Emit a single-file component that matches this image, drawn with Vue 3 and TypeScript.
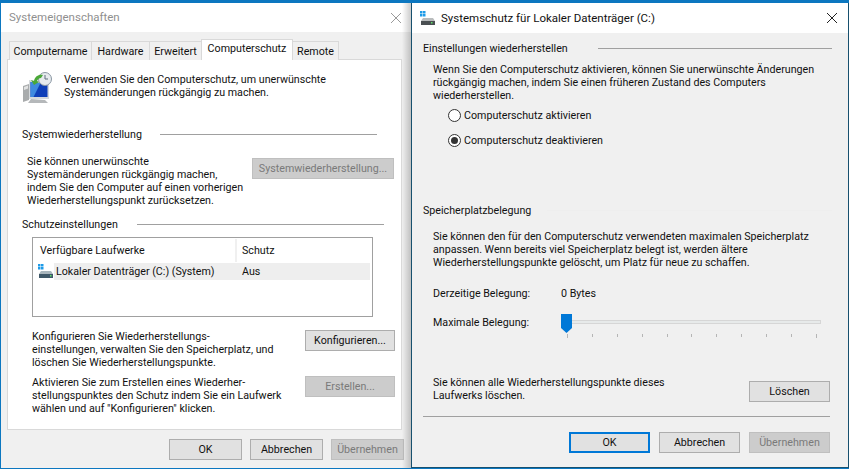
<script setup lang="ts">
const tabs = ['Computername', 'Hardware', 'Erweitert', 'Computerschutz', 'Remote']
const ticks = Array.from({ length: 11 }, (_, i) => i)
</script>

<template>
  <div class="screen">
    <section class="win left">
      <header class="title"><span class="title-text muted">Systemeigenschaften</span>
        <svg class="close" viewBox="0 0 12 12" width="12" height="12"><path d="M1 1l10 10M11 1L1 11" stroke="#9a9a9a" stroke-width="1" fill="none"/></svg>
      </header>
      <div class="body">
        <nav class="tabs">
          <span v-for="t in tabs" :key="t" class="tab" :class="{ active: t === 'Computerschutz' }">{{ t }}</span>
        </nav>
        <div class="panel">
          <div class="intro">
            <svg class="shield" viewBox="0 0 32 32" width="32" height="32">
              <path d="M1 14l6-2v16l-6 2z" fill="#a9acad"/>
              <path d="M2 15l4-1.500v3L2 18z" fill="#e2e3e3"/>
              <path d="M7 8l20 2v17L7 27z" fill="#d5d9dc"/>
              <path d="M8.500 10l17 2v13L8.500 25z" fill="#0f3fb8"/>
              <path d="M8.500 10l10 1-7 14h-3z" fill="#3f8ae0"/>
              <path d="M9 27l14 1 3 3H6z" fill="#b5b8ba"/>
              <circle cx="23" cy="7" r="6.500" fill="#e6eaee" stroke="#8a97a3"/>
              <path d="M23 3v4h3" stroke="#5f6d7a" fill="none"/>
              <path d="M12 9c1-5 5-7 9-6l-2 3c-2 0-3 1-4 3l2 1-5 3-3-5z" fill="#4aa838"/>
            </svg>
            <p>Verwenden Sie den Computerschutz, um unerwünschte<br>Systemänderungen rückgängig zu machen.</p>
          </div>

          <div class="legend first"><span>Systemwiederherstellung</span><i></i></div>
          <div class="restore">
            <p>Sie können unerwünschte<br>Systemänderungen rückgängig machen,<br>indem Sie den Computer auf einen vorherigen<br>Wiederherstellungspunkt zurücksetzen.</p>
            <button class="btn off wide">Systemwiederherstellung...</button>
          </div>

          <div class="legend second"><span>Schutzeinstellungen</span><i></i></div>
          <div class="list">
            <div class="list-head"><span class="c1">Verfügbare Laufwerke</span><span class="c2">Schutz</span></div>
            <div class="list-row">
              <svg class="drive" viewBox="0 0 16 15" width="16" height="15">
                <rect x="0" y="0" width="2.500" height="2.500" fill="#1e9be8"/><rect x="3" y="0" width="2.500" height="2.500" fill="#1e9be8"/>
                <rect x="0" y="3" width="2.500" height="2.500" fill="#1e9be8"/><rect x="3" y="3" width="2.500" height="2.500" fill="#1e9be8"/>
                <path d="M3 7h10l2 3H1z" fill="#a9b6bd"/>
                <rect x="1" y="10" width="14" height="4" fill="#3f5868"/>
                <rect x="12" y="11" width="1.500" height="1.500" fill="#5fe06a"/>
              </svg>
              <div class="row-fill"><span class="c1b">Lokaler Datenträger (C:) (System)</span><span class="c2b">Aus</span></div>
            </div>
          </div>

          <div class="action one">
            <p>Konfigurieren Sie Wiederherstellungs-<br>einstellungen, verwalten Sie den Speicherplatz, und<br>löschen Sie Wiederherstellungspunkte.</p>
            <button class="btn small">Konfigurieren...</button>
          </div>
          <div class="action two">
            <p>Aktivieren Sie zum Erstellen eines Wiederher-<br>stellungspunktes den Schutz indem Sie ein Laufwerk<br>wählen und auf "Konfigurieren" klicken.</p>
            <button class="btn small off">Erstellen...</button>
          </div>
        </div>
        <footer class="foot">
          <button class="btn std">OK</button>
          <button class="btn std">Abbrechen</button>
          <button class="btn std off">Übernehmen</button>
        </footer>
      </div>
    </section>

    <section class="win right">
      <header class="title">
        <svg class="drive" viewBox="0 0 16 15" width="16" height="15">
          <rect x="0" y="0" width="2.500" height="2.500" fill="#1e9be8"/><rect x="3" y="0" width="2.500" height="2.500" fill="#1e9be8"/>
          <rect x="0" y="3" width="2.500" height="2.500" fill="#1e9be8"/><rect x="3" y="3" width="2.500" height="2.500" fill="#1e9be8"/>
          <path d="M3 7h10l2 3H1z" fill="#b9bcbd"/>
          <rect x="1" y="10" width="14" height="4" fill="#4a4f52"/>
          <rect x="11" y="11" width="1.500" height="1.500" fill="#5fe06a"/>
        </svg>
        <span class="title-text">Systemschutz für Lokaler Datenträger (C:)</span>
        <svg class="close" viewBox="0 0 12 12" width="12" height="12"><path d="M1 1l10 10M11 1L1 11" stroke="#222" stroke-width="1" fill="none"/></svg>
      </header>
      <div class="r-body">
        <div class="legend r1"><span>Einstellungen wiederherstellen</span><i></i></div>
        <p class="r-text t1">Wenn Sie den Computerschutz aktivieren, können Sie unerwünschte Änderungen<br>rückgängig machen, indem Sie einen früheren Zustand des Computers<br>wiederherstellen.</p>
        <label class="radio a"><span class="dot"></span>Computerschutz aktivieren</label>
        <label class="radio b"><span class="dot on"></span>Computerschutz deaktivieren</label>

        <div class="legend r2"><span>Speicherplatzbelegung</span><i></i></div>
        <p class="r-text t2">Sie können den für den Computerschutz verwendeten maximalen Speicherplatz<br>anpassen. Wenn bereits viel Speicherplatz belegt ist, werden ältere<br>Wiederherstellungspunkte gelöscht, um Platz für neue zu schaffen.</p>
        <div class="usage"><span class="u-label">Derzeitige Belegung:</span><span>0 Bytes</span></div>
        <div class="slider-row">
          <span class="u-label">Maximale Belegung:</span>
          <div class="slider">
            <div class="track"></div>
            <svg class="thumb" viewBox="0 0 11 19" width="11" height="19"><path d="M0 0h11v14l-5.500 5L0 14z" fill="#0078d7"/></svg>
            <div class="ticks"><i v-for="n in ticks" :key="n" :class="{ big: n === 0 || n === 10 }"></i></div>
          </div>
        </div>
        <div class="delete">
          <p>Sie können alle Wiederherstellungspunkte dieses<br>Laufwerks löschen.</p>
          <button class="btn std2">Löschen</button>
        </div>
        <div class="rule"></div>
        <footer class="r-foot">
          <button class="btn std2 focus">OK</button>
          <button class="btn std2">Abbrechen</button>
          <button class="btn std2 off">Übernehmen</button>
        </footer>
      </div>
    </section>
  </div>
</template>

<style>
html, body { margin: 0; background: #0078d4; overflow: hidden; }
</style>

<style scoped>
.screen {
  width: 849px; height: 469px; box-sizing: border-box; padding: 3px 0 1px;
  display: flex; background: #0c77c0; overflow: hidden;
  font: 10.7px/13px Roboto, "Liberation Sans", sans-serif; color: #111; white-space: nowrap;
}
p { margin: 0; }
.win { display: flex; flex-direction: column; box-sizing: border-box; }
.left { width: 410px; margin-left: 1px; position: relative; }
.left::after {
  content: ""; position: absolute; top: 0; bottom: 0; right: 0; width: 9px;
  background: linear-gradient(to right, rgba(0,0,0,0), rgba(0,0,0,.2));
}
.right { width: 438px; border: 1px solid #17506e; border-top: 0; background: #f0f0f0; }
.title { height: 29px; flex: none; display: flex; align-items: center; background: #fff; padding: 0 10px 0 8px; font-size: 11.5px; }
.title-text { flex: 1; }
.muted { color: #8f8f8f; }
.left .title { padding-right: 9px; }
.right .title { height: 30px; padding-left: 8px; padding-right: 10px; }
.right .title .drive { margin-right: 5px; }
.body { flex: 1; background: #f0f0f0; display: flex; flex-direction: column; padding: 0 0 0 6px; }
.tabs { display: flex; height: 28px; align-items: flex-end; padding-left: 2px; margin-bottom: -1px; position: relative; z-index: 1; }
.tab { height: 19px; line-height: 20px; box-sizing: border-box; padding: 0; border: 1px solid #d9d9d9; border-bottom: 0; margin-right: -1px; background: #f0f0f0; text-align: center; }
.tab:nth-child(1) { width: 83px; }
.tab:nth-child(2) { width: 59px; }
.tab:nth-child(3) { width: 53px; }
.tab:nth-child(4) { width: 92px; height: 21px; background: #fff; line-height: 18px; }
.tab:nth-child(5) { width: 47px; }
.panel { width: 395px; height: 371px; box-sizing: border-box; border: 1px solid #d9d9d9; background: #fff; padding: 0 0 0 14px; }
.intro { display: flex; gap: 10px; padding-top: 12px; }
.intro p { padding-top: 1px; }
.legend { display: flex; align-items: center; }
.legend i { flex: 1; height: 1px; background: #a0a0a0; }
.first { margin-top: 24px; width: 355px; }
.first i { margin-left: 18px; }
.restore { display: flex; padding-left: 5px; margin-top: 14px; width: 367px; justify-content: space-between; }
.wide { width: 142px; height: 21px; margin-top: 3px; }
.second { margin-top: 11px; width: 362px; }
.second i { margin-left: 19px; }
.list { width: 341px; height: 80px; box-sizing: border-box; border: 1px solid #a0a0a0; margin: 6px 0 0 10px; padding: 1px 2px 0 5px; }
.list-head { height: 23px; display: flex; align-items: center; border-bottom: 1px solid #fff; }
.c1 { width: 195px; padding-left: 2px; }
.c2 { flex: 1; border-left: 2px solid #f0f0f0; height: 23px; line-height: 23px; padding-left: 5px; }
.list-row { display: flex; align-items: center; height: 17px; }
.row-fill { flex: 1; height: 17px; line-height: 17px; background: #eee; display: flex; padding-left: 2px; }
.c1b { width: 186px; }
.action { display: flex; width: 363px; margin-left: 10px; justify-content: space-between; }
.one { margin-top: 13px; }
.two { margin-top: 7px; }
.small { width: 90px; height: 21px; }
.btn {
  flex: none; box-sizing: border-box; padding: 0; background: #e1e1e1; border: 1px solid #adadad;
  font: inherit; color: #111; text-align: center;
}
.btn.off { background: #ccc; border-color: #bfbfbf; color: #7a7a7a; }
.foot { display: flex; gap: 8px; padding: 9px 0 0 162px; }
.std { width: 73px; height: 21px; }
.r-body { flex: 1; padding: 0 18px 0 11px; display: flex; flex-direction: column; }
.r1 { margin-top: 9px; width: 409px; }
.r1 i { margin-left: 30px; }
.r-text { margin-left: 10px; }
.t1 { margin-top: 8px; }
.radio { display: flex; align-items: center; margin-left: 25px; height: 15px; gap: 3px; }
.radio.a { margin-top: 6px; }
.radio.b { margin-top: 10px; }
.dot { width: 13px; height: 13px; box-sizing: border-box; border: 1px solid #333; border-radius: 50%; background: #fff; display: block; position: relative; }
.dot.on::after { content: ""; position: absolute; inset: 2px; border-radius: 50%; background: #333; }
.r2 { margin-top: 56px; width: 409px; }
.r2 i { margin-left: 16px; background: #eee; }
.t2 { margin-top: 13px; }
.usage { display: flex; margin: 18px 0 0 10px; }
.u-label { width: 128px; flex: none; }
.slider-row { display: flex; margin: 16px 0 0 10px; height: 26px; }
.slider { position: relative; width: 260px; height: 26px; margin-top: -2px; }
.track { position: absolute; left: 2px; right: 0; top: 6px; height: 4px; box-sizing: border-box; background: #e7eaea; border: 1px solid #d6d6d6; }
.thumb { position: absolute; left: 0; top: 0; }
.ticks { position: absolute; left: 6px; top: 20px; width: 250px; display: flex; justify-content: space-between; }
.ticks i { width: 1px; height: 3px; background: #b5b5b5; }
.ticks i.big { height: 4px; }
.delete { display: flex; justify-content: space-between; margin: 34px 0 0 10px; width: 397px; }
.std2 { width: 81px; height: 21px; }
.delete .btn { margin-top: 5px; }
.rule { height: 1px; background: #a0a0a0; margin: 14px 0 0 0; width: 407px; }
.r-foot { display: flex; gap: 9px; padding: 15px 0 0 146px; }
.focus { border: 2px solid #0078d7; }
</style>
